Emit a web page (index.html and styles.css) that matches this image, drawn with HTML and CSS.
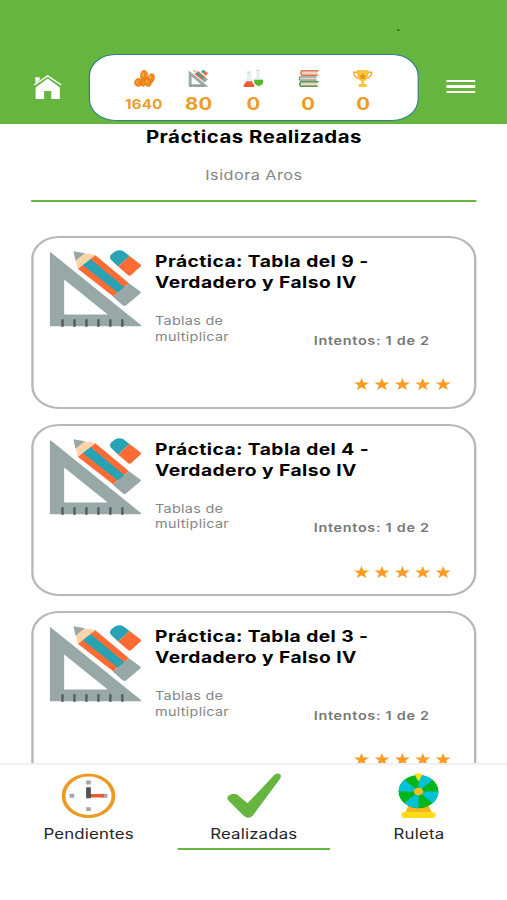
FILE: index.html
```html
<!DOCTYPE html>
<html lang="es">
<head>
<meta charset="utf-8">
<title>Prácticas Realizadas</title>
<link rel="stylesheet" href="styles.css">
</head>
<body>
<svg class="defs" aria-hidden="true">
  <symbol id="tools" viewBox="28 30 278 230" preserveAspectRatio="none">
    <path fill="#98a8a7" fill-rule="evenodd" d="M30 39Q30 35 34 38L304 254Q307 258 302 258H30ZM73 118V223H204Z"/>
    <path stroke="#586366" stroke-width="8" stroke-linecap="round" d="M68 240V256M104 240V256M140 240V256M176 240V256M212 240V256M248 240V256"/>
    <path fill="#ff6b35" d="M166 45L268 129L220 168L114 86Z"/>
    <path fill="#28a3b4" d="M150 58L252 142L236 156L130 73Z" stroke="#28a3b4" stroke-width="4"/>
    <path fill="#ffd3aa" d="M102 35L168 45L114 87Z"/>
    <path fill="#98a8a7" d="M101 34L135 40L107 62Z"/>
    <path fill="#98a8a7" d="M268 129L302 154Q306 157 302 160L259 196Q254 199 249 195L219 169Z"/>
    <path fill="#28a3b4" d="M214 59Q207 50 216 42L227 34Q238 28 250 33L270 48L235 79Z"/>
    <path fill="#ff6b35" d="M270 48L303 73Q306 76 303 79L273 106Q269 109 265 105L235 79Z"/>
  </symbol>
  <symbol id="star" viewBox="0 0 24 24">
    <path fill="#fb9b23" d="M12 0l3 8.400 9 .2-7.100 5.500 2.600 8.900-7.500-5.200-7.500 5.200 2.600-8.900L0 8.600l9-.2z"/>
  </symbol>
</svg>
<div class="screen">
  <header class="topbar">
    <svg class="home" viewBox="0 0 28 24" preserveAspectRatio="none"><path fill="#fff" d="M1.5 2.3H6V5L2 8.2ZM14 3.500L26 12.500V24H17.5V16H10.5V24H2V12.500Z"/><path fill="none" stroke="#fff" stroke-width="1.5" d="M.5 10L14 .9L27.5 10"/></svg>
    <div class="stats">
      <div class="stat"><svg viewBox="0 0 20 17" preserveAspectRatio="none"><g fill="#f28a1d" stroke="#d9690f" stroke-width=".5"><ellipse cx="4" cy="12.400" rx="3.800" ry="4" transform="rotate(25 4 12.4)"/><ellipse cx="17" cy="8.500" rx="3.100" ry="5" transform="rotate(15 17 8.5)"/><ellipse cx="9.800" cy="5.500" rx="3.700" ry="5.200"/><ellipse cx="13.300" cy="12.200" rx="3.200" ry="4.500" transform="rotate(-25 13.3 12.2)"/><ellipse cx="8.800" cy="12.500" rx="2.300" ry="4"/></g><path stroke="#ffc044" stroke-width="1.200" stroke-linecap="round" d="M8.700 3V6M2.800 11V13M16 6V8M12 10.500L12.500 12.500"/></svg><span class="small">1640</span></div>
      <div class="stat"><svg><use href="#tools"/></svg><span>80</span></div>
      <div class="stat"><svg viewBox="0 0 20 17" preserveAspectRatio="none"><path fill="#e4f0f2" d="M3.500 2H7.500V7L11 13H.5L3.500 8ZM13 0H16V7L19.500 10H10.500L13 7Z"/><path fill="#f05a35" d="M3 11.300H8L11 15.500Q11 17 9.500 17H1Q-.8 16.500 .5 14.500Z"/><path fill="#58b82c" d="M10.500 9.700H19.800Q20.500 15.500 15.200 16Q10.500 15.500 10.500 9.700Z"/><path stroke="#b9ccd4" stroke-width=".7" d="M3 2H8M12.300 .4H16.700"/></svg><span>0</span></div>
      <div class="stat"><svg viewBox="0 0 20 17" preserveAspectRatio="none"><path fill="#e8d7c2" d="M3 1H19V5H3ZM1 7H18V10H1ZM2 12H19V16H2Z"/><path fill="none" stroke="#e47656" stroke-width="1.500" d="M20 .8H3Q1.200 3 3 5.300H19"/><path fill="none" stroke="#799896" stroke-width="1.300" d="M18 6.800H1Q0 8.500 1 10.200H18"/><path fill="none" stroke="#57984d" stroke-width="1.500" d="M20 11.700H2Q-.2 14 2 16.300H19"/></svg><span>0</span></div>
      <div class="stat"><svg viewBox="0 0 20 17" preserveAspectRatio="none"><path fill="none" stroke="#f3a83b" stroke-width="1.400" d="M5 2.200H.9Q1 7.500 6.500 8.500M15 2.200H19.100Q19 7.500 13.500 8.500"/><path fill="#fcc63c" d="M4 0H16Q16 9 11.500 11V14H14V17H6V14H8.500V11Q4 9 4 0Z"/><path fill="#ef8c20" d="M10 3L11.200 5.300 13.500 5.500 12 7.200 12.300 9.500 10 8.500 7.700 9.500 8 7.200 6.500 5.500 8.800 5.300Z"/></svg><span>0</span></div>
    </div>
    <div class="menu"><i></i><i></i><i></i></div>
    <i class="speck"></i>
  </header>
  <main class="content">
    <h1>Prácticas Realizadas</h1>
    <p class="student">Isidora Aros</p>
    <article class="card">
      <svg class="picture"><use href="#tools"/></svg>
      <div class="info">
        <h2>Práctica: Tabla del 9 -<br>Verdadero y Falso IV</h2>
        <div class="detail"><p>Tablas de<br>multiplicar</p><strong>Intentos: 1 de 2</strong></div>
        <div class="stars"><svg><use href="#star"/></svg><svg><use href="#star"/></svg><svg><use href="#star"/></svg><svg><use href="#star"/></svg><svg><use href="#star"/></svg></div>
      </div>
    </article>
    <article class="card">
      <svg class="picture"><use href="#tools"/></svg>
      <div class="info">
        <h2>Práctica: Tabla del 4 -<br>Verdadero y Falso IV</h2>
        <div class="detail"><p>Tablas de<br>multiplicar</p><strong>Intentos: 1 de 2</strong></div>
        <div class="stars"><svg><use href="#star"/></svg><svg><use href="#star"/></svg><svg><use href="#star"/></svg><svg><use href="#star"/></svg><svg><use href="#star"/></svg></div>
      </div>
    </article>
    <article class="card">
      <svg class="picture"><use href="#tools"/></svg>
      <div class="info">
        <h2>Práctica: Tabla del 3 -<br>Verdadero y Falso IV</h2>
        <div class="detail"><p>Tablas de<br>multiplicar</p><strong>Intentos: 1 de 2</strong></div>
        <div class="stars"><svg><use href="#star"/></svg><svg><use href="#star"/></svg><svg><use href="#star"/></svg><svg><use href="#star"/></svg><svg><use href="#star"/></svg></div>
      </div>
    </article>
  </main>
  <nav class="tabs">
    <a class="tab">
      <svg viewBox="0 0 46 46"><circle cx="23" cy="23" r="21" fill="#fff" stroke="#ed9a24" stroke-width="3.2"/><path fill="#a3a7b2" d="M21 7.500h4v4h-4zM21 34.500h4v4h-4zM7 21h4v4H7zM35 21h4v4h-4z"/><path fill="#f0562e" d="M24 21.300h12v3.400H24z"/><path fill="#505257" d="M21 14.500h4V25.500h-4z"/></svg>
      <span>Pendientes</span>
    </a>
    <a class="tab active">
      <svg viewBox="0 0 46 46"><path fill="#65b53f" d="M1.500 28Q-1 25 2 22.500Q5.500 19.500 9 22L17.500 30.500L40 2Q43-.5 45 1.500Q46.500 3 45 5.500L22 43Q18 47.500 14 43Z"/></svg>
      <span>Realizadas</span>
    </a>
    <a class="tab">
      <svg viewBox="0 0 46 46"><path fill="#f9b51c" d="M15 31H31L34 40H12Z"/><rect x="8.500" y="39.500" width="29" height="6" rx="3" fill="#ffdc18"/><circle cx="23" cy="18.800" r="16.800" fill="#02b51b"/><path fill="#00c2d5" d="M23 18.800V2A16.800 16.800 0 0 1 34.880 6.920ZM23 18.800H39.800A16.800 16.800 0 0 1 34.880 30.680ZM23 18.800V35.600A16.800 16.800 0 0 1 11.120 30.680ZM23 18.800H6.200A16.800 16.800 0 0 1 11.120 6.920Z"/><circle cx="23" cy="18.800" r="3.900" fill="#f5bd23"/><path fill="#ffe01b" d="M19.800 1Q23-.7 26.200 1L23.800 7.500H22.200Z"/></svg>
      <span>Ruleta</span>
    </a>
  </nav>
</div>
</body>
</html>
```
FILE: styles.css
```css
* { box-sizing: border-box; margin: 0; padding: 0; }
html, body { width: 507px; height: 900px; overflow: hidden; background: #fff; }
body { font-family: Inter, "Liberation Sans", sans-serif; }
.defs { position: absolute; width: 0; height: 0; }

/* The interface is laid out narrow and widened to fill the window. */
.screen {
  width: 422.5px;
  height: 900px;
  display: flex;
  flex-direction: column;
  transform: scaleX(1.2);
  transform-origin: 0 0;
}

.topbar {
  flex: none;
  position: relative;
  height: 124px;
  padding: 54px 27px 3px 28px;
  background: #65b53f;
  display: flex;
  justify-content: space-between;
  align-items: center;
}
.home { width: 23.500px; height: 24px; margin-bottom: 1px; }
.stats {
  width: 275.500px;
  height: 67px;
  margin-left: -.5px;
  padding: 0 22.500px;
  background: #fff;
  border: 1.500px solid #31808d;
  border-radius: 22px;
  display: grid;
  grid-template-columns: repeat(5, 1fr);
}
.stat { display: flex; flex-direction: column; align-items: center; padding-top: 15px; }
.stat svg { width: 16.500px; height: 17px; flex: none; overflow: visible; }
.stat span { margin-top: 6px; line-height: 22px; font-size: 17px; font-weight: 700; color: #ee9b27; letter-spacing: .2px; }
.stat .small { font-size: 12.500px; line-height: 24px; }
.menu { width: 24px; margin-bottom: 2px; display: flex; flex-direction: column; gap: 3.500px; }
.menu i { height: 2.200px; background: #fff; }
.speck { position: absolute; left: 331px; top: 29px; width: 1.500px; height: 2px; background: #3f7d22; }

.content {
  flex: none;
  height: 639px;
  overflow: hidden;
  padding: 0 25.500px 0 26.200px;
}
h1 { font-size: 17px; line-height: 27px; height: 26px; font-weight: 700; letter-spacing: .4px; text-align: center; }
.student {
  height: 52px;
  padding-top: 15px;
  margin-bottom: 34px;
  border-bottom: 2px solid #65b53f;
  font-size: 13.500px;
  line-height: 20px;
  letter-spacing: .4px;
  color: #858585;
  text-align: center;
}
.card {
  height: 172.500px;
  margin-bottom: 15px;
  padding: 12px 19px 0 13px;
  border: 2px solid #b8b8b8;
  border-radius: 23px;
  display: flex;
  gap: 11px;
}
.picture { flex: none; width: 77px; height: 77px; }
.info { flex: 1; padding-top: 1px; }
h2 { font-size: 16px; line-height: 21px; font-weight: 700; letter-spacing: .38px; white-space: nowrap; }
.detail { display: flex; justify-content: space-between; align-items: flex-end; margin-top: 20px; padding-right: 18px; font-size: 12px; line-height: 15.500px; letter-spacing: .25px; color: #858585; }
.detail strong { font-weight: 600; letter-spacing: .58px; color: #777; position: relative; top: 4px; white-space: nowrap; }
.stars { display: flex; justify-content: flex-end; gap: 4.500px; margin-top: 34px; }
.stars svg { width: 12.600px; height: 12.600px; }

.tabs {
  flex: 1;
  padding: 8px 4.500px 0 5px;
  border-top: 2px solid #f0f0f0;
  display: grid;
  grid-template-columns: repeat(3, 1fr);
  justify-items: center;
}
.tab { width: 127px; height: 77px; display: flex; flex-direction: column; align-items: center; }
.tab svg { width: 45.500px; height: 45.500px; }
.tab span { margin-top: 5px; font-size: 14px; line-height: 20px; letter-spacing: .15px; color: #252525; }
.active { border-bottom: 2px solid #65b53f; }
```
